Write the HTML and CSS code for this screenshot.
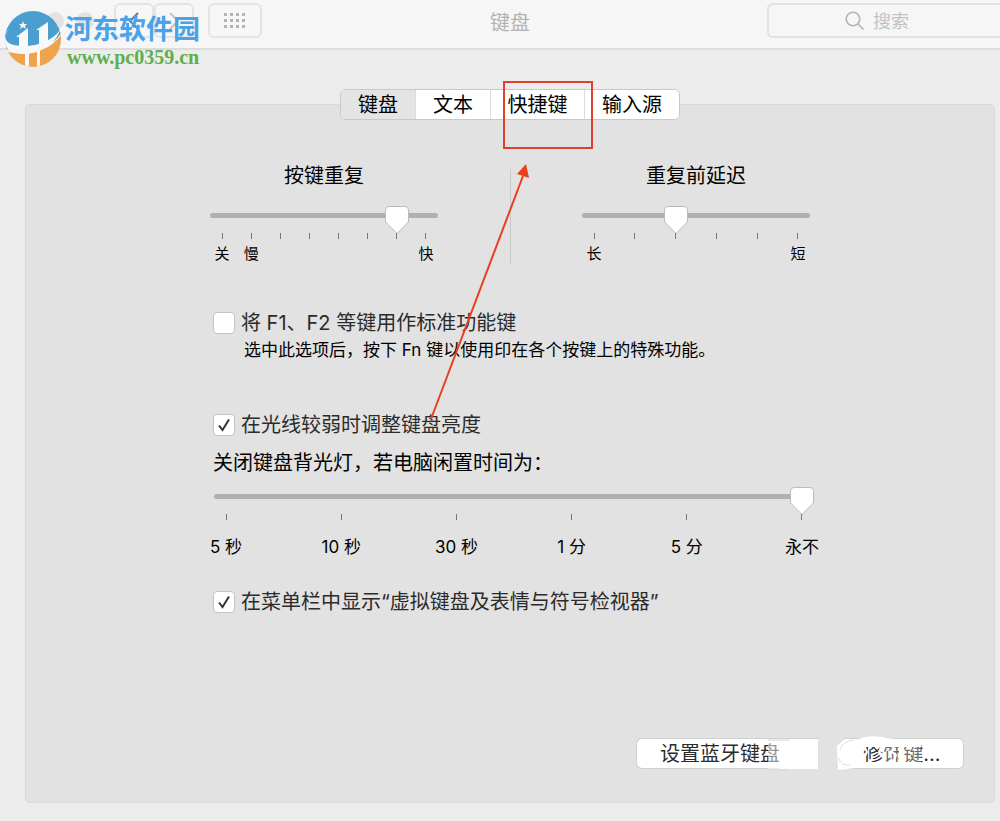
FILE: index.html
```html
<!DOCTYPE html>
<html lang="zh-CN">
<head>
    <meta charset="UTF-8">
    <meta name="viewport" content="width=device-width, initial-scale=1.0">
    <title>键盘</title>
    <link rel="stylesheet" href="styles.css">
</head>
<body>
    <header class="toolbar">
        <div class="toolbar-left">
            <div class="lights">
                <span class="light"></span>
                <span class="light"></span>
                <span class="light"></span>
            </div>
            <div class="nav">
                <button class="tool-btn nav-btn" type="button" aria-label="后退">
                    <svg width="12" height="20" viewBox="0 0 12 20"><path d="M10 2L2 10l8 8" fill="none" stroke="#777" stroke-width="2"/></svg>
                </button>
                <button class="tool-btn nav-btn" type="button" aria-label="前进">
                    <svg width="12" height="20" viewBox="0 0 12 20"><path d="M2 2l8 8-8 8" fill="none" stroke="#c4c4c4" stroke-width="2"/></svg>
                </button>
            </div>
            <button class="tool-btn grid-btn" type="button" aria-label="全部显示">
                <svg width="24" height="16" viewBox="0 0 24 16" fill="#b4b4b4">
                    <path d="M1 0h3v3H1zM7 0h3v3H7zM13 0h3v3h-3zM19 0h3v3h-3zM1 6h3v3H1zM7 6h3v3H7zM13 6h3v3h-3zM19 6h3v3h-3zM1 12h3v3H1zM7 12h3v3H7zM13 12h3v3h-3zM19 12h3v3h-3z"/>
                </svg>
            </button>
        </div>
        <h1 class="title">键盘</h1>
        <label class="search">
            <svg width="20" height="20" viewBox="0 0 20 20"><g fill="none" stroke="#b4b4b4" stroke-width="1.6"><circle cx="8" cy="8" r="6.8"/><path d="M13 13l5.500 5.500"/></g></svg>
            <input type="search" placeholder="搜索" aria-label="搜索">
        </label>
    </header>

    <div class="watermark">
        <svg class="logo" width="58" height="58" viewBox="0 0 58 58">
            <defs>
                <clipPath id="disc"><circle cx="29" cy="29" r="28"/></clipPath>
            </defs>
            <g clip-path="url(#disc)">
                <path d="M0 0h58v22C50 36 30 44 0 38z" fill="#4a9fd0"/>
                <path d="M4 42c22 5 42-1 54-18v34H4z" fill="#f0a24d"/>
                <path d="M15 38V27h-3l12-9v20zM35 36V20h-3l12-8v22z" fill="#f8f8f8"/>
                <path d="M21 42h4v16h-4zM33 40h3v18h-3z" fill="#f8f8f8"/>
            </g>
            <path d="M5 18c-6 9-4 15 5 17 17 4 38-3 46-15-4 14-21 24-36 24C5 44-5 36 5 18z" fill="#f8f8f8"/>
            <path d="M19 11l1 3h3l-2 2 1 3-3-2-3 2 1-3-2-2h3z" fill="#f8f8f8"/>
        </svg>
        <div class="watermark-text">
            <span class="site-name">河东软件园</span>
            <span class="site-url">www.pc0359.cn</span>
        </div>
    </div>

    <main class="panel">
        <nav class="tabs">
            <button class="tab active" type="button">键盘</button>
            <button class="tab" type="button">文本</button>
            <button class="tab tab-wide" type="button">快捷键</button>
            <button class="tab tab-wide" type="button">输入源</button>
        </nav>

        <div class="content">
            <div class="sliders">
                <div class="slider">
                    <label class="slider-title" for="repeat">按键重复</label>
                    <input type="range" id="repeat" min="0" max="7" value="6">
                    <div class="ticks">
                        <span>关</span><span>慢</span><span></span><span></span><span></span><span></span><span></span><span>快</span>
                    </div>
                </div>
                <div class="divider"></div>
                <div class="slider">
                    <label class="slider-title" for="delay">重复前延迟</label>
                    <input type="range" id="delay" min="0" max="5" value="2">
                    <div class="ticks">
                        <span>长</span><span></span><span></span><span></span><span></span><span>短</span>
                    </div>
                </div>
            </div>

            <div class="group">
                <label class="check"><input type="checkbox"> 将 F1、F2 等键用作标准功能键</label>
                <p class="hint">选中此选项后，按下 Fn 键以使用印在各个按键上的特殊功能。</p>
            </div>

            <div class="group">
                <label class="check"><input type="checkbox" checked> 在光线较弱时调整键盘亮度</label>
                <label class="idle-title" for="idle">关闭键盘背光灯，若电脑闲置时间为：</label>
                <div class="idle">
                    <input type="range" id="idle" min="0" max="5" value="5">
                    <div class="ticks ticks-large">
                        <span>5 秒</span><span>10 秒</span><span>30 秒</span><span>1 分</span><span>5 分</span><span>永不</span>
                    </div>
                </div>
                <label class="check"><input type="checkbox" checked> 在菜单栏中显示“虚拟键盘及表情与符号检视器”</label>
            </div>
        </div>

        <footer class="actions">
            <button class="btn btn-bluetooth" type="button">设置蓝牙键盘
                <svg class="smudge" width="50" height="34" viewBox="0 0 50 34">
                    <path d="M11 2h39v30H11z" fill="#fff"/>
                    <path d="M0 3h11v29H0z" fill="#fff" opacity="0.5"/>
                    <path d="M0 3h22M0 33h20" stroke="#d6d6d6" fill="none"/>
                </svg>
            </button>
            <button class="btn btn-modifier" type="button">修饰键...
                <svg class="smudge" width="126" height="38" viewBox="0 0 126 38">
                    <path d="M0 12c6-8 14-6 22-7 8-4 20-3 27-1l20 2-14 5-32 1-5 22-17 2z" fill="#fff"/>
                    <path d="M25 8l5 10-4 8 5 6M45 10l-3 8 5 4-2 9M58 8l-3 10 4 3-3 8" fill="none" stroke="#fff" stroke-width="2"/>
                    <path d="M22 8h62v5H22zM22 28h62v5H22zM62 12h5v18h-5z" fill="#fff"/>
                    <path d="M46 12h38v18H46z" fill="#fff" opacity="0.300"/>
                    <path d="M3 16c2-7 6-9 14-10M2 24c1 6 5 7 11 7" fill="none" stroke="#e0e0e0"/>
                </svg>
            </button>
        </footer>

        <!-- red frame and arrow pointing at the shortcuts tab -->
        <svg class="callout" width="170" height="345" viewBox="0 0 170 345">
            <rect x="77" y="4" width="88" height="66" fill="none" stroke="#e0402c" stroke-width="2"/>
            <path d="M4 341L96 98" stroke="#e8401f" stroke-width="2"/>
            <path d="M99 86l3 14-12-4z" fill="#e8401f"/>
        </svg>
    </main>
</body>
</html>
```
FILE: styles.css
```css
* {
    box-sizing: border-box;
}
body {
    margin: 0;
    min-height: 100vh;
    background: #ececec;
    color: #000;
    font-family: Inter, "Noto Sans CJK SC", sans-serif;
    font-size: 20px;
    line-height: 30px;
    position: relative;
}
button,
input {
    font: inherit;
    color: inherit;
}

/* toolbar */
.toolbar {
    display: grid;
    grid-template-columns: 1fr auto 1fr;
    align-items: start;
    padding: 3px 0 10px 20px;
    background: #f6f6f6;
    border-bottom: 2px solid #dcdcdc;
}
.toolbar-left {
    display: flex;
    align-items: center;
    margin-left: -4px;
}
.lights {
    display: flex;
    gap: 12px;
    margin-right: 20px;
}
.light {
    width: 18px;
    height: 18px;
    border-radius: 50%;
    background: #e2e2e2;
}
.nav {
    display: flex;
    margin-right: 14px;
}
.tool-btn {
    display: flex;
    align-items: center;
    justify-content: center;
    height: 35px;
    padding: 0;
    background: #f7f7f7;
    border: 2px solid #e4e4e4;
    border-radius: 6px;
}
.nav-btn {
    width: 40px;
}
.grid-btn {
    width: 54px;
}
.title {
    margin: 5px 0 0;
    font-size: 20px;
    font-weight: 400;
    color: #b2b2b2;
}
.search {
    justify-self: end;
    display: flex;
    align-items: center;
    gap: 8px;
    width: 233px;
    height: 35px;
    padding-left: 76px;
    border: 2px solid #e2e2e2;
    border-right: 0;
    border-radius: 6px 0 0 6px;
}
.search input {
    flex: 1;
    min-width: 0;
    padding: 2px 0 0;
    border: 0;
    outline: 0;
    background: none;
    font-size: 18px;
}
.search input::placeholder {
    color: #c2c2c2;
}

/* site mark over the top left corner */
.watermark {
    position: absolute;
    left: 4px;
    top: 10px;
    display: flex;
    gap: 3px;
}
.watermark-text {
    display: flex;
    flex-direction: column;
    padding-top: 5px;
}
.site-name {
    font-size: 27px;
    line-height: 30px;
    font-weight: 700;
    color: #4aa3e8;
}
.site-url {
    padding-left: 2px;
    font-family: "Liberation Serif", serif;
    font-size: 20px;
    line-height: 24px;
    font-weight: 700;
    color: #5cb04e;
}

/* panel */
.panel {
    position: relative;
    margin: 54px 5px 18px 25px;
    padding-bottom: 33px;
    background: #e2e2e2;
    border: 1px solid #d9d9d9;
    border-radius: 5px;
}
.tabs {
    display: flex;
    width: max-content;
    margin: -16px auto 0;
    background: #fff;
    border: 1px solid #c8c8c8;
    border-radius: 6px;
    overflow: hidden;
}
.tab {
    width: 75px;
    height: 29px;
    padding: 0;
    line-height: 28px;
    background: #fff;
    border: 0;
    border-right: 1px solid #dcdcdc;
}
.tab-wide {
    width: 94px;
}
.tab:last-child {
    border-right: 0;
}
.tab.active {
    background: #e4e4e4;
}
.content {
    max-width: 600px;
    margin: 41px auto 0;
}
.sliders {
    display: flex;
    justify-content: space-between;
}
.slider {
    width: 228px;
}
.slider-title {
    display: block;
    text-align: center;
}
.divider {
    width: 1px;
    margin-top: 8px;
    background: #c9c9c9;
}

input[type="range"] {
    -webkit-appearance: none;
    appearance: none;
    display: block;
    width: 100%;
    height: 5px;
    margin: 22px 0 15px;
    background: #b0b0b0;
    border-radius: 3px;
}
input[type="range"]::-webkit-slider-thumb {
    -webkit-appearance: none;
    width: 24px;
    height: 28px;
    background: url("data:image/svg+xml,%3Csvg xmlns='http://www.w3.org/2000/svg' viewBox='0 0 24 28'%3E%3Cpath d='M4 .5h16q3.500 0 3.500 3.500v11q0 1-1 2L12 27.500 1.500 17q-1-1-1-2V4Q.5.5 4 .5z' fill='%23fff' stroke='%23bbb'/%3E%3C/svg%3E") no-repeat;
    margin-top: 8px;
}
.ticks {
    display: flex;
    justify-content: space-between;
    font-size: 15px;
    line-height: 20px;
}
.ticks span {
    display: flex;
    flex-direction: column;
    align-items: center;
    gap: 5px;
    width: 24px;
    white-space: nowrap;
}
.ticks span::before {
    content: "";
    width: 1px;
    height: 6px;
    background: #777;
}
.ticks-large {
    font-size: 17px;
}
.ticks-large span {
    gap: 17px;
}

.group {
    margin-top: 44px;
    padding-left: 3px;
}
.group + .group {
    margin-top: 48px;
}
.check {
    display: flex;
    align-items: center;
    gap: 6px;
    color: #2b2b2b;
}
.check input {
    -webkit-appearance: none;
    appearance: none;
    width: 22px;
    height: 22px;
    margin: 0;
    background: #fff;
    border: 1px solid #c4c4c4;
    border-radius: 4px;
}
.check input:checked {
    background: #fff url("data:image/svg+xml,%3Csvg xmlns='http://www.w3.org/2000/svg' viewBox='0 0 20 20'%3E%3Cpath d='M5 10.500l3.500 4.500L15 4.500' fill='none' stroke='%23333' stroke-width='2'/%3E%3C/svg%3E") no-repeat;
}
.hint {
    margin: 0 0 0 31px;
    font-size: 17px;
    line-height: 24px;
}
.idle-title {
    display: block;
    margin-top: 8px;
}
.idle {
    margin: 0 -4px 30px 1px;
}
.idle input[type="range"] {
    margin-top: 16px;
}

.actions {
    display: flex;
    justify-content: flex-end;
    gap: 22px;
    margin-top: 121px;
    padding-right: 30px;
}
.btn {
    position: relative;
    height: 31px;
    padding: 0;
    line-height: 28px;
    color: #2b2b2b;
    background: #fff;
    border: 1px solid #cfcfcf;
    border-radius: 6px;
}
.btn-bluetooth {
    width: 182px;
    padding-left: 23px;
    text-align: left;
    border-right: 0;
    border-radius: 6px 0 0 6px;
}
.btn-modifier {
    width: 124px;
}
.smudge {
    position: absolute;
    top: -2px;
    right: 0;
}
.btn-modifier .smudge {
    top: -5px;
}
.callout {
    position: absolute;
    left: calc(50% - 83px);
    top: -27px;
    pointer-events: none;
}
```
